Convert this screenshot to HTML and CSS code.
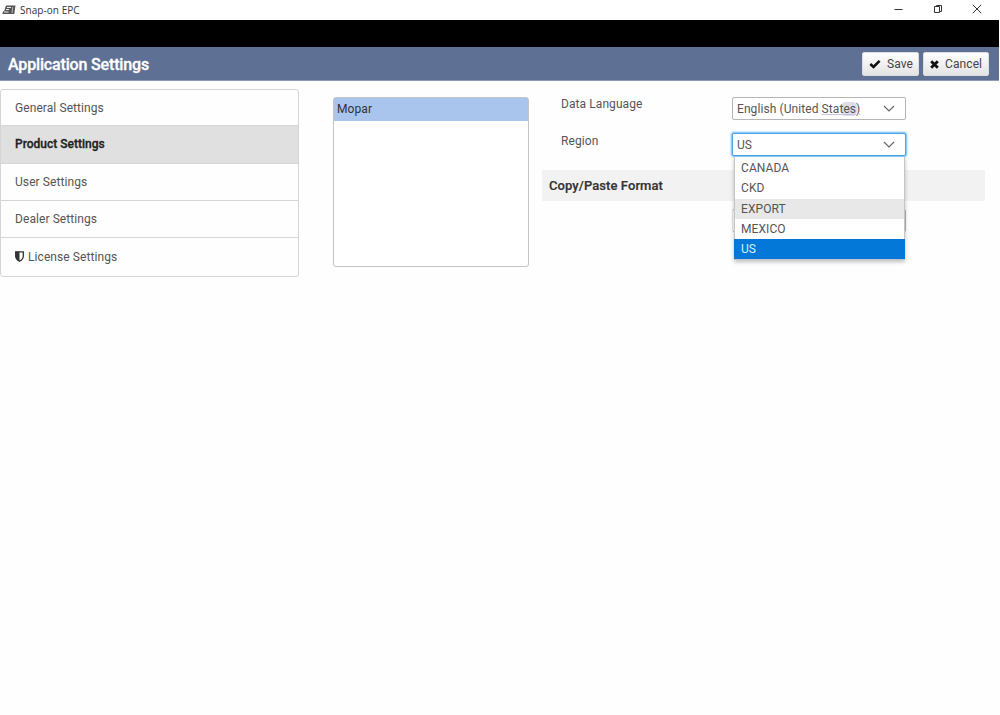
FILE: index.html
```html
<!DOCTYPE html>
<html lang="en">
    <head>
        <meta charset="utf-8">
        <title>Snap-on EPC</title>
        <link rel="stylesheet" href="styles.css">
    </head>
    <body>
        <div class="titleBar">
            <svg class="appIcon" width="14" height="10" viewBox="0 0 14 10">
                <path d="M4 .5h9.500l-1.200 8.500H.3l.7-2.500 1.200-.5z" fill="#555"/>
                <path d="M5 2.500h4M4 4.500h3M2 7h4.500" stroke="#eee" stroke-width="1.100" fill="none"/>
                <path d="M10.800 2l-.8 6" stroke="#bbb" stroke-width="1" fill="none"/>
            </svg>
            <span class="appName">Snap-on EPC</span>
            <div class="windowButtons">
                <svg width="10" height="10" viewBox="0 0 10 10"><path d="M.5 5.5h8"/></svg>
                <svg width="10" height="10" viewBox="0 0 10 10"><path d="M1.500 2.500h5v6h-5zM3.500 2.500v-1h5v6h-2"/></svg>
                <svg width="10" height="10" viewBox="0 0 10 10"><path d="M.8.8l8.400 8.400M9.200.8L.8 9.200"/></svg>
            </div>
        </div>
        <div class="menuStrip"></div>
        <div class="pageHeader">
            <h1 class="pageTitle">Application Settings</h1>
            <button class="headerButton">
                <svg width="12" height="10" viewBox="0 0 12 10"><path d="M1.300 5l3.200 3L10.600 1.800" fill="none" stroke="#111" stroke-width="2.600"/></svg>
                Save
            </button>
            <button class="headerButton cancelButton">
                <svg width="9" height="9" viewBox="0 0 9 9"><path d="M1.200 1.200l6.600 6.600M7.800 1.200L1.200 7.800" stroke="#111" stroke-width="2.800"/></svg>
                Cancel
            </button>
        </div>

        <div class="content">
            <div class="sideNav">
                <div class="navItem">General Settings</div>
                <div class="navItem active">Product Settings</div>
                <div class="navItem">User Settings</div>
                <div class="navItem">Dealer Settings</div>
                <div class="navItem">
                    <svg class="shieldIcon" width="9" height="11" viewBox="0 0 9 11">
                        <path d="M.7.8h7.600v4.400c0 2.300-1.600 3.800-3.800 5C2.300 9 .7 7.500.7 5.200z" fill="none" stroke="#333" stroke-width="1.300"/>
                        <path d="M.7.8h3.800v9.400C2.300 9 .7 7.500.7 5.200z" fill="#333"/>
                    </svg>
                    License Settings
                </div>
            </div>

            <div class="productList">
                <div class="productItem">Mopar</div>
            </div>

            <div class="settingsForm">
                <div class="formRow">
                    <label class="formLabel">Data Language</label>
                    <div class="selectBox">
                        <span>English (United <span class="marked">States)</span></span>
                        <svg class="arrow" width="12" height="7" viewBox="0 0 12 7"><path d="M1 1l5 5 5-5"/></svg>
                    </div>
                </div>
                <div class="formRow">
                    <label class="formLabel regionLabel">Region</label>
                    <div class="selectBox open">
                        <span>US</span>
                        <svg class="arrow" width="12" height="7" viewBox="0 0 12 7"><path d="M1 1l5 5 5-5"/></svg>
                        <div class="dropdown">
                            <div class="option">CANADA</div>
                            <div class="option">CKD</div>
                            <div class="option hovered">EXPORT</div>
                            <div class="option">MEXICO</div>
                            <div class="option selected">US</div>
                        </div>
                    </div>
                </div>
                <h2 class="sectionTitle">Copy/Paste Format</h2>
                <div class="formRow">
                    <label class="formLabel"></label>
                    <div class="selectBox covered"></div>
                </div>
            </div>
        </div>
    </body>
</html>
```
FILE: styles.css
```css
*
{
    box-sizing: border-box;
}
body
{
    margin: 0;
    height: 715px;
    padding-right: 1px;
    overflow: hidden;
    background-color: #fefefe;
    font-family: Roboto, "Liberation Sans", sans-serif;
    font-size: 12px;
    letter-spacing: 0.08px;
    color: #555;
}
.titleBar
{
    display: flex;
    align-items: center;
    height: 20px;
    padding: 0 17px 0 2px;
    background-color: #fff;
}
.appName
{
    margin-left: 4px;
    font-family: "Open Sans", "Noto Sans", sans-serif;
    font-size: 10px;
    letter-spacing: 0.05px;
    color: #333;
}
.windowButtons
{
    display: flex;
    gap: 29px;
    margin-left: auto;
    margin-top: -2px;
}
.windowButtons svg
{
    fill: none;
    stroke: #333;
}
.menuStrip
{
    height: 27px;
    background-color: #000;
}
.pageHeader
{
    display: flex;
    align-items: center;
    height: 34px;
    padding: 0 10px 0 8px;
    background-color: #5e7094;
    border-bottom: 1px solid #8d9bb5;
}
.pageTitle
{
    margin: 0 auto 0 0;
    padding-top: 1px;
    font-size: 16px;
    font-weight: 500;
    letter-spacing: -0.16px;
    color: #fff;
    -webkit-text-stroke: 0.3px #fff;
}
.headerButton
{
    display: flex;
    align-items: center;
    gap: 6px;
    height: 24px;
    width: 57px;
    padding: 1px 0 0 6px;
    border: 1px solid #ddd;
    border-radius: 2px;
    background: linear-gradient(#fff, #e3e3e3);
    font-family: inherit;
    font-size: 12px;
    letter-spacing: 0.1px;
    color: #444;
}
.cancelButton
{
    width: 66px;
    margin-left: 4px;
}
.content
{
    display: flex;
    align-items: flex-start;
}
.sideNav
{
    width: 299px;
    margin-top: 8px;
    border: 1px solid #d5d5d5;
    border-radius: 3px;
}
.navItem
{
    display: flex;
    align-items: center;
    height: 37px;
    padding: 0 0 1px 14px;
    border-bottom: 1px solid #d5d5d5;
}
.navItem:first-child
{
    height: 36px;
    padding-bottom: 0;
}
.navItem:last-child
{
    height: 38px;
    border-bottom: none;
}
.active
{
    height: 38px;
    background-color: #e0e0e0;
    font-weight: 500;
    letter-spacing: 0;
    color: #222;
    -webkit-text-stroke: 0.3px #222;
}
.shieldIcon
{
    margin-right: 4px;
}
.productList
{
    width: 196px;
    height: 170px;
    margin: 16px 0 0 34px;
    border: 1px solid #c4c4c4;
    border-radius: 3px;
    background-color: #fff;
}
.productItem
{
    height: 23px;
    padding-left: 3px;
    line-height: 23px;
    background-color: #a9c4ed;
    color: #333;
}
.settingsForm
{
    width: 443px;
    margin: 16px 0 0 13px;
}
.formRow
{
    display: flex;
    height: 36px;
    padding-left: 19px;
}
.formLabel
{
    width: 171px;
    line-height: 15px;
}
.regionLabel
{
    padding-top: 1px;
}
.selectBox
{
    position: relative;
    display: flex;
    align-items: center;
    justify-content: space-between;
    width: 174px;
    height: 23px;
    padding: 0 10px 0 4px;
    border: 1px solid #b5b5b5;
    border-radius: 2px;
    background-color: #fff;
}
.open
{
    border-color: #4ba3e8;
    box-shadow: 0 0 2px 1px #6bb8f2;
}
.covered
{
    border-left-color: #e6e6e6;
}
.arrow
{
    fill: none;
    stroke: #666;
    stroke-width: 1.2;
}
.marked
{
    background: radial-gradient(circle at 27px 7px, #dcdcea 8px, transparent 9px);
    text-decoration: underline #c3c3dc;
}
.dropdown
{
    position: absolute;
    top: 23px;
    left: 1px;
    z-index: 1;
    width: 171px;
    height: 103px;
    padding-top: 1px;
    border: 1px solid #c5c5c5;
    border-top: none;
    background-color: #fff;
    box-shadow: 0 2px 4px rgba(0, 0, 0, 0.25);
}
.option
{
    height: 20.3px;
    padding-left: 6px;
    line-height: 21px;
}
.hovered
{
    background-color: #e8e8e8;
}
.selected
{
    margin: 0 -1px;
    padding-left: 7px;
    background-color: #0478d8;
    color: #d9f1ff;
}
.sectionTitle
{
    height: 31px;
    margin: 1px 0 8px;
    padding-left: 7px;
    line-height: 31px;
    background-color: #f2f2f2;
    font-size: 13px;
    font-weight: 500;
    color: #333;
    -webkit-text-stroke: 0.2px #333;
}
```
